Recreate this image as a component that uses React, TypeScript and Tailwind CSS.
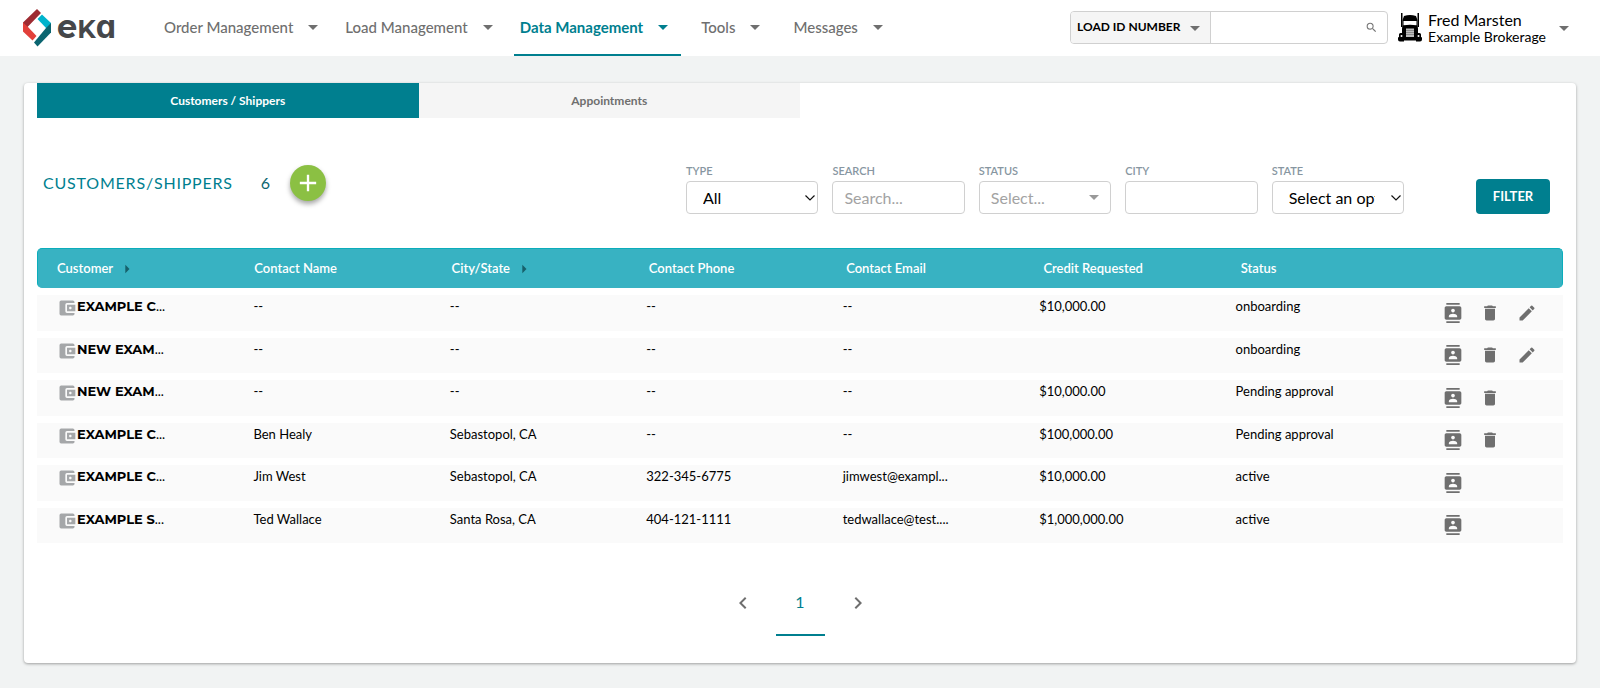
// src/App.tsx
import React, { useState } from 'react';
import clsx from 'clsx';
import {
  MdAccountBalanceWallet,
  MdAdd,
  MdArrowDropDown,
  MdArrowRight,
  MdChevronLeft,
  MdChevronRight,
  MdContacts,
  MdDelete,
  MdEdit,
  MdSearch,
} from 'react-icons/md';

type Action = 'contacts' | 'delete' | 'edit';

interface Customer {
  name: string;
  contact: string;
  city: string;
  phone: string;
  email: string;
  credit: string;
  status: string;
  actions: Action[];
}

const customers: Customer[] = [
  { name: 'EXAMPLE C', contact: '--', city: '--', phone: '--', email: '--', credit: '$10,000.00', status: 'onboarding', actions: ['contacts', 'delete', 'edit'] },
  { name: 'NEW EXAM', contact: '--', city: '--', phone: '--', email: '--', credit: '', status: 'onboarding', actions: ['contacts', 'delete', 'edit'] },
  { name: 'NEW EXAM', contact: '--', city: '--', phone: '--', email: '--', credit: '$10,000.00', status: 'Pending approval', actions: ['contacts', 'delete'] },
  { name: 'EXAMPLE C', contact: 'Ben Healy', city: 'Sebastopol, CA', phone: '--', email: '--', credit: '$100,000.00', status: 'Pending approval', actions: ['contacts', 'delete'] },
  { name: 'EXAMPLE C', contact: 'Jim West', city: 'Sebastopol, CA', phone: '322-345-6775', email: 'jimwest@exampl...', credit: '$10,000.00', status: 'active', actions: ['contacts'] },
  { name: 'EXAMPLE S', contact: 'Ted Wallace', city: 'Santa Rosa, CA', phone: '404-121-1111', email: 'tedwallace@test....', credit: '$1,000,000.00', status: 'active', actions: ['contacts'] },
];

const columns = [
  { label: 'Customer', sortable: true },
  { label: 'Contact Name' },
  { label: 'City/State', sortable: true },
  { label: 'Contact Phone' },
  { label: 'Contact Email' },
  { label: 'Credit Requested' },
  { label: 'Status' },
];

const actionIcons = {
  contacts: { label: 'Contacts', Icon: MdContacts },
  delete: { label: 'Delete', Icon: MdDelete },
  edit: { label: 'Edit', Icon: MdEdit },
};

const fieldClass = 'w-full h-[33px] bg-white border border-[#d0d0d0] rounded text-base focus:outline-none focus:border-[#007f8f]';

function Logo() {
  return (
    <a href="#" aria-label="eka" className="flex items-center gap-1.5 w-24 shrink-0">
      <svg viewBox="0 0 28 38" className="w-7 h-[38px] shrink-0">
        <path d="M0 13.500 14 0 18 4 5 17.500 4 19 0 17z" fill="#9e2b32" />
        <path d="M0 13.500 5 18 13.500 27 9.500 31.500 0 22.500z" fill="#e2403a" />
        <path d="M14.500 10 19 5.500 28 14v4.500l-4.500 1z" fill="#00b3cc" />
        <path d="M23 19 28 14v9.500L14.500 37.500 11 33.500z" fill="#0b6570" />
      </svg>
      <span className="flex items-baseline font-[Montserrat,Inter,sans-serif] font-bold text-[32px] leading-[38px] text-[#45474a]">
        e<span className="uppercase text-[25px]">k</span>
        <span className="font-[Inter,sans-serif] [font-feature-settings:'cv11']">a</span>
      </span>
    </a>
  );
}

function TruckIcon() {
  return (
    <svg viewBox="0 0 24 30" className="w-6 h-[30px] shrink-0" aria-hidden="true">
      <path d="M3 0h1.500v14H3zM19.500 0H21v14h-1.500z" />
      <path d="M6 3Q12 1.200 18 3L19.500 7v12h-15V7z" />
      <path d="M5.500 8h13v4.500Q12 11 5.500 12.500z" fill="#fff" />
      <path d="M5 12.500h14l1 3v11H4v-11z" />
      <rect x="8" y="15.500" width="8" height="8.500" fill="#bdbdbd" />
      <path d="M8 17.500h8M8 19.500h8M8 21.500h8" stroke="#777" strokeWidth=".7" />
      <path d="M1 21.500q0-1.500 1.500-1.500H6v8.500H2q-2 0-2-2v-1.500q0-1 1-1zM23 21.500q0-1.500-1.500-1.500H18v8.500h4q2 0 2-2v-1.500q0-1-1-1z" />
      <path d="M5 24.500h14v3H5z" />
      <circle cx="3.500" cy="23" r="1" fill="#fff" />
      <circle cx="20.500" cy="23" r="1" fill="#fff" />
    </svg>
  );
}

function NavItem({ label, active }: { label: string; active?: boolean }) {
  return (
    <button
      type="button"
      className={clsx(
        'h-full flex items-center gap-2 px-1.5 border-b-2 text-[15px] whitespace-nowrap',
        active ? 'border-[#007f8f] text-[#007f8f] font-bold' : 'border-transparent text-[#6f6f6f] font-medium'
      )}
    >
      {label}
      <MdArrowDropDown className="size-6" />
    </button>
  );
}

function Chevron() {
  return (
    <svg viewBox="0 0 10 6" className="absolute right-[3px] top-3.5 w-2.5 h-1.5 pointer-events-none" fill="none" stroke="#111" strokeWidth="1.2">
      <path d="M.5.5 5 5 9.500.5" />
    </svg>
  );
}

function Field({ id, label, children }: { id: string; label: string; children: React.ReactNode }) {
  return (
    <div className="flex-1 min-w-0">
      <label htmlFor={id} className="block mb-0.5 text-[11px] leading-4 font-semibold text-[#8796a1]">
        {label}
      </label>
      <div className="relative">{children}</div>
    </div>
  );
}

export default function App() {
  const [tab, setTab] = useState('customers');
  const [search, setSearch] = useState('');
  const [city, setCity] = useState('');

  const tabClass = (id: string) =>
    clsx('flex-1 h-[35px] text-xs font-bold', tab === id ? 'bg-[#007f8f] text-white' : 'bg-[#f5f5f5] text-[#6f6f6f]');

  return (
    <div className="min-h-screen bg-[#f1f3f3] font-[Lato,sans-serif] text-black">
      <header className="h-14 bg-white flex items-center pl-[23px] pr-6">
        <Logo />

        <nav className="flex self-stretch gap-3.5 ml-[39px]">
          <div className="flex gap-2">
            <NavItem label="Order Management" />
            <NavItem label="Load Management" />
            <NavItem label="Data Management" active />
          </div>
          <NavItem label="Tools" />
          <NavItem label="Messages" />
        </nav>

        {/* Global load search */}
        <form className="ml-auto mb-0.5 flex h-[33px] w-[318px] border border-[#d0d0d0] rounded overflow-hidden" onSubmit={(e) => e.preventDefault()}>
          <div className="relative w-[140px] bg-[#f5f5f5] border-r border-[#d0d0d0]">
            <select aria-label="Search by" className="appearance-none w-full h-full pl-1.5 pr-6 text-xs font-bold focus:outline-none">
              <option>LOAD ID NUMBER</option>
            </select>
            <MdArrowDropDown className="absolute right-[3px] top-1 size-6 text-[#6f6f6f] pointer-events-none" />
          </div>
          <input type="text" aria-label="Load search" className="flex-1 min-w-0 px-2 text-sm focus:outline-none" />
          <button type="submit" aria-label="Search" className="w-8 flex items-center justify-center text-[#777]">
            <MdSearch className="size-[13px]" />
          </button>
        </form>

        <button type="button" className="flex items-center gap-1.5 ml-2.5 text-left">
          <TruckIcon />
          <span>
            <span className="block text-base leading-[17px]">Fred Marsten</span>
            <span className="block text-sm leading-[17px]">Example Brokerage</span>
          </span>
          <MdArrowDropDown className="size-6 text-[#6f6f6f]" />
        </button>
      </header>

      <main className="mx-6 mt-[27px] px-[13px] bg-white rounded-[4px] shadow-[0_1px_3px_rgba(0,0,0,0.35)]">
        <div role="tablist" className="flex w-1/2">
          <button type="button" role="tab" aria-selected={tab === 'customers'} className={tabClass('customers')} onClick={() => setTab('customers')}>
            Customers / Shippers
          </button>
          <button type="button" role="tab" aria-selected={tab === 'appointments'} className={tabClass('appointments')} onClick={() => setTab('appointments')}>
            Appointments
          </button>
        </div>

        <div className="flex items-start mt-[45px] pl-1.5 pr-[13px]">
          <div className="flex items-center mt-0.5">
            <h1 className="text-base tracking-wider text-[#007f8f]">CUSTOMERS/SHIPPERS</h1>
            <span className="ml-7 text-base text-[#0b6570]">6</span>
            <button type="button" aria-label="Add customer" className="ml-5 size-9 rounded-full bg-[#8bc043] text-white flex items-center justify-center shadow-[0_3px_5px_rgba(0,0,0,0.35)]">
              <MdAdd className="size-7" />
            </button>
          </div>

          <form className="ml-auto flex items-end" onSubmit={(e) => e.preventDefault()}>
            <div className="flex gap-3.5 w-[718px]">
              <Field id="type" label="TYPE">
                <select id="type" className={clsx(fieldClass, 'appearance-none pl-4 pr-7')}>
                  <option>All</option>
                </select>
                <Chevron />
              </Field>
              <Field id="search" label="SEARCH">
                <input
                  id="search"
                  type="text"
                  value={search}
                  onChange={(e) => setSearch(e.target.value)}
                  placeholder="Search..."
                  className={clsx(fieldClass, 'px-[11px] placeholder:text-[#a3a3a3]')}
                />
              </Field>
              <Field id="status" label="STATUS">
                <select id="status" className={clsx(fieldClass, 'appearance-none px-[11px] text-[#a3a3a3]')}>
                  <option>Select...</option>
                </select>
                <MdArrowDropDown className="absolute right-[5px] top-1 size-6 text-[#999] pointer-events-none" />
              </Field>
              <Field id="city" label="CITY">
                <input id="city" type="text" value={city} onChange={(e) => setCity(e.target.value)} className={clsx(fieldClass, 'px-[11px]')} />
              </Field>
              <Field id="state" label="STATE">
                <select id="state" className={clsx(fieldClass, 'appearance-none pl-4 pr-7')}>
                  <option>Select an option</option>
                </select>
                <Chevron />
              </Field>
            </div>
            <button type="submit" className="ml-[72px] w-[74px] h-[35px] rounded bg-[#007f8f] text-white text-[13px] font-bold">
              FILTER
            </button>
          </form>
        </div>

        <table className="block mt-[34px]">
          <thead className="block">
            <tr className="grid grid-cols-[repeat(7,1fr)_105px] items-center h-10 px-[19px] pt-0.5 rounded-[5px] bg-[#38b2c2] border border-t-[#0badbb] border-x-[#0badbb] border-b-[#38b2c2] text-white">
              {columns.map((col) => (
                <th key={col.label} scope="col" className="flex items-center gap-1 text-[13px] font-semibold text-left">
                  {col.label}
                  {col.sortable && <MdArrowRight className="size-5 text-[#17606b]" />}
                </th>
              ))}
              <th aria-label="Actions" />
            </tr>
          </thead>
          <tbody className="grid auto-rows-fr gap-[7px] mt-[7px] min-h-[248px]">
            {customers.map((c, i) => (
              <tr key={i} className="grid grid-cols-[repeat(7,1fr)_111px] px-5 bg-[#fafafa] text-[13px] leading-4">
                <td className="flex pt-[3px]">
                  <MdAccountBalanceWallet className="size-5 text-[#a5a7a9]" />
                  <span className="font-[Montserrat,Inter,sans-serif] font-bold">{c.name}</span>
                  ...
                </td>
                <td className="pt-[3px]">{c.contact}</td>
                <td className="pt-[3px]">{c.city}</td>
                <td className="pt-[3px]">{c.phone}</td>
                <td className="pt-[3px]">{c.email}</td>
                <td className="pt-[3px]">{c.credit}</td>
                <td className="pt-[3px]">{c.status}</td>
                <td className="flex items-center pl-0.5">
                  {c.actions.map((action) => {
                    const { label, Icon } = actionIcons[action];
                    return (
                      <button key={action} type="button" aria-label={label} className="w-[37px] shrink-0 flex justify-center text-[#6f6f6f]">
                        <Icon className="size-5" />
                      </button>
                    );
                  })}
                </td>
              </tr>
            ))}
          </tbody>
        </table>

        <nav aria-label="Pagination" className="flex justify-center items-center gap-[21px] pt-[27px] pb-[27px]">
          <button type="button" aria-label="Previous page" className="text-[#6f6f6f]">
            <MdChevronLeft className="size-6" />
          </button>
          <button type="button" aria-current="page" className="w-[49px] h-[66px] border-b-2 border-[#007f8f] text-base text-[#007f8f]">
            1
          </button>
          <button type="button" aria-label="Next page" className="text-[#6f6f6f]">
            <MdChevronRight className="size-6" />
          </button>
        </nav>
      </main>
    </div>
  );
}
